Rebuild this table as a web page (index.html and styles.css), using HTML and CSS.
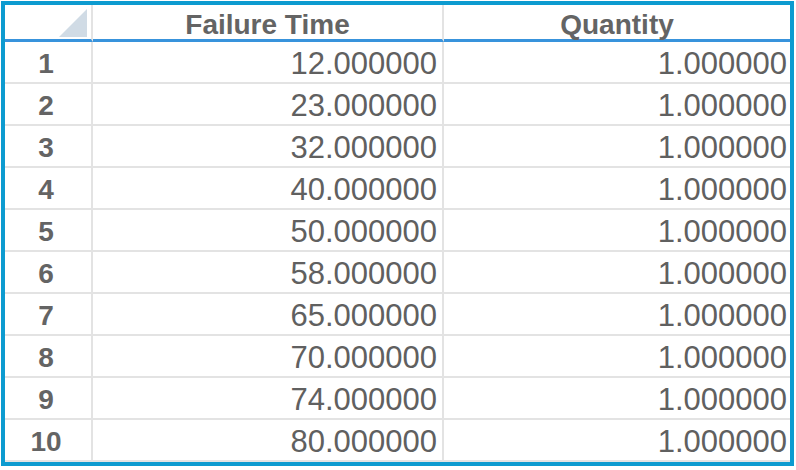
FILE: index.html
```html
<!DOCTYPE html>
<html>
<head>
<meta charset="utf-8">
<link rel="stylesheet" href="styles.css">
</head>
<body>
<div class="grid">
  <div class="hcell corner"><span class="tri"></span></div>
  <div class="hcell">Failure Time</div>
  <div class="hcell last">Quantity</div>

  <div class="num">1</div><div class="val">12.000000</div><div class="val last">1.000000</div>
  <div class="num">2</div><div class="val">23.000000</div><div class="val last">1.000000</div>
  <div class="num">3</div><div class="val">32.000000</div><div class="val last">1.000000</div>
  <div class="num">4</div><div class="val">40.000000</div><div class="val last">1.000000</div>
  <div class="num">5</div><div class="val">50.000000</div><div class="val last">1.000000</div>
  <div class="num">6</div><div class="val">58.000000</div><div class="val last">1.000000</div>
  <div class="num">7</div><div class="val">65.000000</div><div class="val last">1.000000</div>
  <div class="num">8</div><div class="val">70.000000</div><div class="val last">1.000000</div>
  <div class="num">9</div><div class="val">74.000000</div><div class="val last">1.000000</div>
  <div class="num">10</div><div class="val">80.000000</div><div class="val last">1.000000</div>
</div>
</body>
</html>
```

FILE: styles.css
```css
html, body {
  margin: 0;
  padding: 0;
  background: #ffffff;
}
body {
  padding: 1px 0 0 1px;
  font-family: "Liberation Sans", Arial, sans-serif;
}
.grid {
  width: 785px;
  border: 4px solid #0d9bd0;
  display: grid;
  grid-template-columns: 88px 351px 346px;
  grid-template-rows: 37px repeat(10, 42px);
  color: #606060;
  background: #fff;
}
.hcell {
  box-sizing: border-box;
  border-bottom: 3px solid #3893dc;
  border-right: 2px solid #e3e3e3;
  display: flex;
  align-items: center;
  justify-content: center;
  font-weight: bold;
  font-size: 28px;
  color: #646464;
  padding-top: 5px;
}
.hcell.last {
  border-right: none;
}
.corner {
  justify-content: flex-end;
  align-items: flex-start;
  padding: 4px 4px 0 0;
}
.tri {
  width: 28px;
  height: 28px;
  background: #d0dbe5;
  clip-path: polygon(100% 0, 100% 100%, 0 100%);
}
.num, .val {
  box-sizing: border-box;
  border-bottom: 2px solid #e3e3e3;
  border-right: 2px solid #e3e3e3;
  display: flex;
  align-items: center;
  padding-top: 3px;
}
.num {
  justify-content: center;
  padding-right: 4px;
  font-weight: bold;
  font-size: 28px;
  color: #646464;
}
.val {
  justify-content: flex-end;
  padding-right: 5px;
  font-size: 31px;
}
.val.last {
  border-right: none;
  padding-right: 3px;
}
```
